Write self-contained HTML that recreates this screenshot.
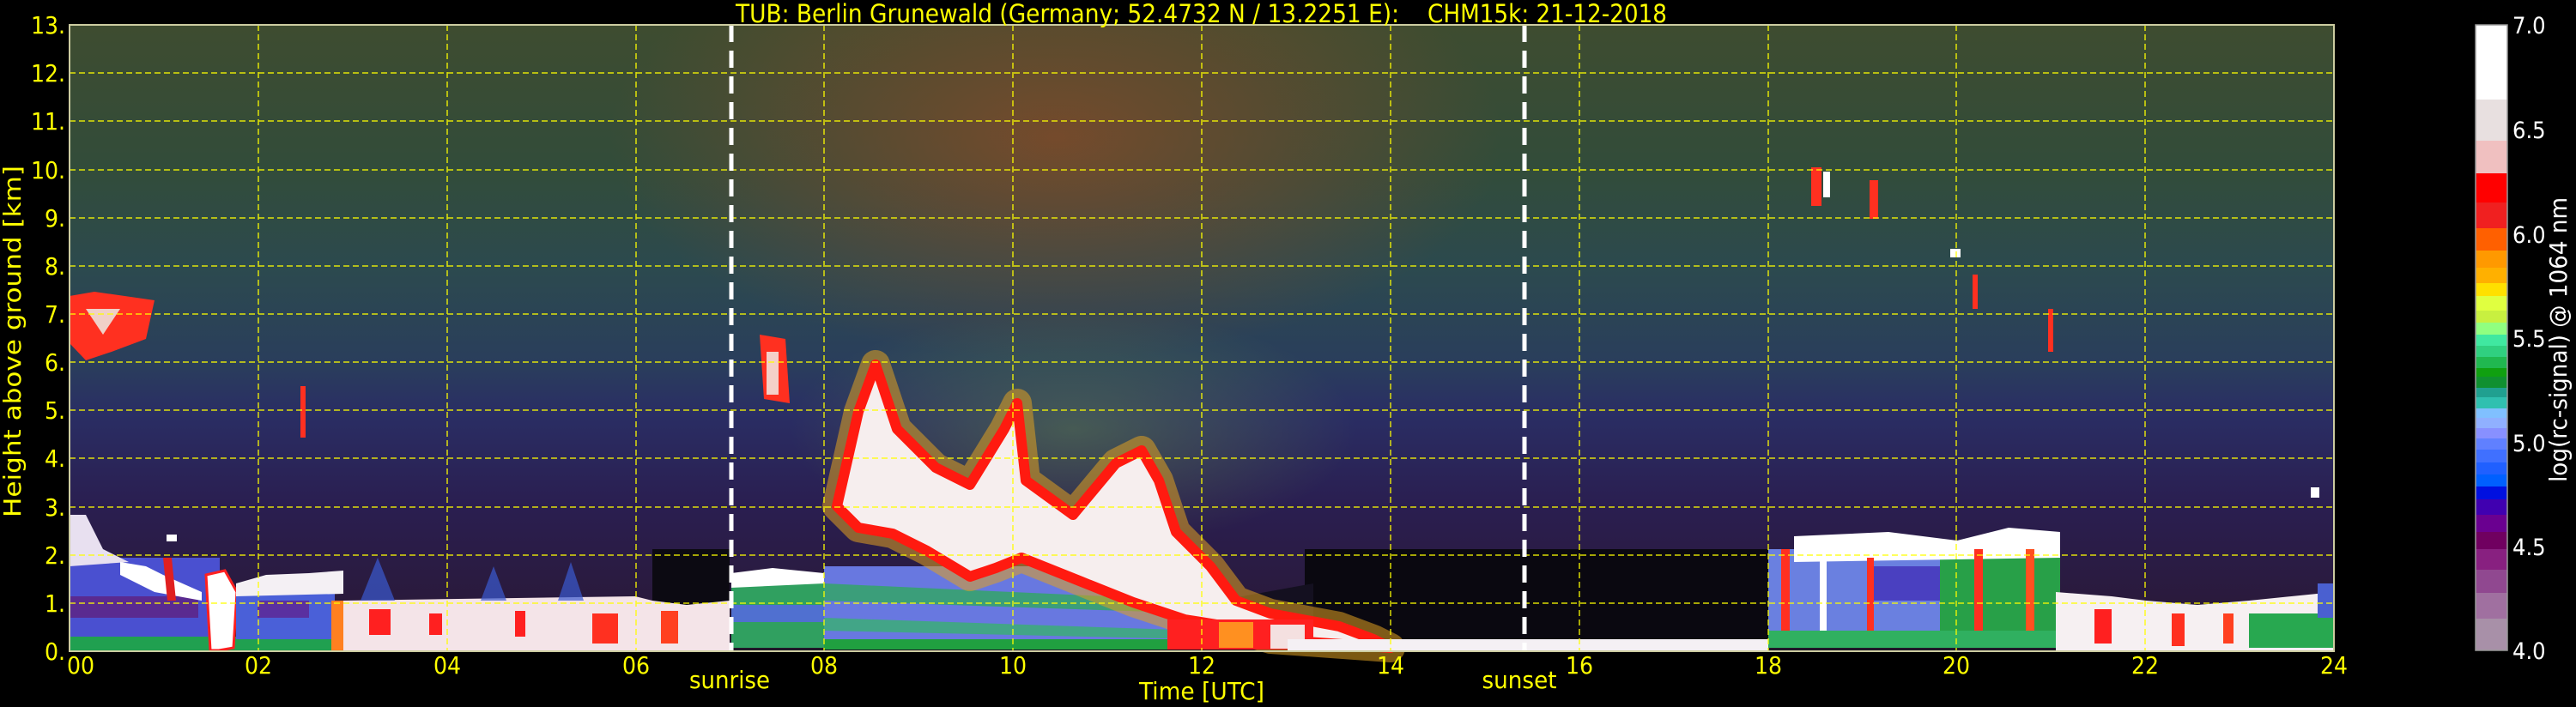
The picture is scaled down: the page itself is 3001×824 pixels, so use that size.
<!DOCTYPE html>
<html><head><meta charset="utf-8"><style>
html,body{margin:0;padding:0;background:#000;width:3001px;height:824px;overflow:hidden}
svg{display:block}
text{font-family:"DejaVu Sans Condensed","Liberation Sans Narrow","Liberation Sans",sans-serif}
</style></head><body>
<svg width="3001" height="824" viewBox="0 0 3001 824" xmlns="http://www.w3.org/2000/svg">
<defs>
<linearGradient id="bg" x1="0" y1="29" x2="0" y2="759" gradientUnits="userSpaceOnUse">
<stop offset="0" stop-color="#3e4c30"/>
<stop offset="0.23" stop-color="#324c3a"/>
<stop offset="0.385" stop-color="#2c4a4e"/>
<stop offset="0.54" stop-color="#2a3e5c"/>
<stop offset="0.62" stop-color="#2a2e64"/>
<stop offset="0.77" stop-color="#2a1e50"/>
<stop offset="0.92" stop-color="#2a1a3c"/>
<stop offset="1" stop-color="#201828"/>
</linearGradient>
<radialGradient id="red" cx="1230" cy="160" r="520" gradientUnits="userSpaceOnUse" gradientTransform="translate(1230 160) scale(1 0.5) translate(-1230 -160)">
<stop offset="0" stop-color="#8a4a28" stop-opacity="0.75"/>
<stop offset="1" stop-color="#8a4a28" stop-opacity="0"/>
</radialGradient>
<radialGradient id="halo" cx="0.5" cy="0.5" r="0.5">
<stop offset="0" stop-color="#70a040" stop-opacity="0.4"/>
<stop offset="1" stop-color="#70a040" stop-opacity="0"/>
</radialGradient>
</defs>
<rect width="3001" height="824" fill="#000"/>
<rect x="81" y="29" width="2638" height="730" fill="url(#bg)"/>
<rect x="81" y="29" width="2638" height="730" fill="url(#red)"/>
<ellipse cx="1250" cy="500" rx="330" ry="140" fill="url(#halo)"/>

<path d="M1520,640 L2060,640 L2060,745 L1520,745 Z" fill="#0a0810"/>
<path d="M1420,700 L1530,680 L1530,745 L1420,745 Z" fill="#141020"/>
<path d="M760,640 L850,640 L850,705 L760,720 Z" fill="#0c0a12"/>

<rect x="81" y="650" width="175" height="95" fill="#4a50d0"/>
<rect x="81" y="695" width="150" height="25" fill="#5a2a90"/>
<path d="M81,600 L100,600 L120,640 L150,655 L81,660 Z" fill="#e8e0f0"/>
<path d="M140,655 L170,660 L190,670 L235,690 L235,700 L180,690 L140,670 Z" fill="#fff"/>
<path d="M190,650 L200,650 L205,700 L195,700 Z" fill="#e02020"/>
<rect x="81" y="742" width="320" height="16" fill="#20a050"/>
<path d="M240,670 L262,665 L276,690 L272,755 L255,758 L245,758 Z" fill="#fff" stroke="#ff2020" stroke-width="3"/>
<rect x="275" y="690" width="115" height="55" fill="#4a60d8"/>
<rect x="300" y="700" width="60" height="20" fill="#5a30a0"/>
<path d="M275,680 L310,670 L360,668 L400,665 L400,692 L275,695 Z" fill="#f4f0f4"/>
<rect x="386" y="700" width="16" height="58" fill="#ff8020"/>
<path d="M400,700 L740,695 L760,700 L800,705 L850,700 L850,759 L400,759 Z" fill="#f4e4e8"/>
<rect x="430" y="710" width="25" height="30" fill="#ff2020"/>
<rect x="500" y="715" width="15" height="25" fill="#ff2020"/>
<rect x="600" y="712" width="12" height="30" fill="#ff2020"/>
<rect x="690" y="715" width="30" height="35" fill="#ff3020"/>
<rect x="770" y="712" width="20" height="38" fill="#ff4020"/>
<path d="M420,700 L440,650 L460,700 Z M560,700 L575,660 L590,700 Z M650,700 L665,655 L680,700 Z" fill="#3a5ad0" opacity="0.7"/>
<rect x="852" y="680" width="110" height="75" fill="#30a060"/>
<rect x="852" y="705" width="110" height="20" fill="#5070d0"/>
<path d="M852,668 L900,662 L960,668 L960,680 L852,685 Z" fill="#fff"/>
<rect x="960" y="660" width="440" height="95" fill="#6878e0"/>
<path d="M960,680 L1400,700 L1400,715 L960,700 Z" fill="#30a860" opacity="0.8"/>
<path d="M960,720 L1400,735 L1400,745 L960,735 Z" fill="#38b070" opacity="0.8"/>
<rect x="960" y="745" width="440" height="12" fill="#20a040"/>
<path d="M975,590 L1000,480 L1020,425 L1045,500 L1090,545 L1130,565 L1170,500 L1185,470 L1195,560 L1250,600 L1300,540 L1330,525 L1350,560 L1370,620 L1410,660 L1440,700 L1480,715 L1560,730 L1600,745 L1620,755 L1480,745 L1430,730 L1380,722 L1320,702 L1260,678 L1190,650 L1160,662 L1130,672 L1080,642 L1040,622 L1000,615 Z" fill="none" stroke="#e0a020" stroke-width="34" stroke-linejoin="round" opacity="0.55"/>
<path d="M975,590 L1000,480 L1020,425 L1045,500 L1090,545 L1130,565 L1170,500 L1185,470 L1195,560 L1250,600 L1300,540 L1330,525 L1350,560 L1370,620 L1410,660 L1440,700 L1480,715 L1560,730 L1600,745 L1620,755 L1480,745 L1430,730 L1380,722 L1320,702 L1260,678 L1190,650 L1160,662 L1130,672 L1080,642 L1040,622 L1000,615 Z" fill="#f6eeee" stroke="#ff1a10" stroke-width="12" stroke-linejoin="round"/>
<rect x="1360" y="722" width="170" height="35" fill="#ff2020"/>
<rect x="1420" y="725" width="40" height="30" fill="#ff9020"/>
<rect x="1480" y="728" width="40" height="28" fill="#f4e0e0"/>
<rect x="1500" y="745" width="560" height="14" fill="#f4f0f4"/>
<rect x="2060" y="640" width="200" height="115" fill="#6a80e0"/>
<rect x="2180" y="660" width="120" height="40" fill="#4a40c0"/>
<rect x="2260" y="650" width="140" height="105" fill="#28a048"/>
<path d="M2090,625 L2200,620 L2280,630 L2340,615 L2400,620 L2400,650 L2090,655 Z" fill="#fff"/>
<rect x="2075" y="640" width="10" height="115" fill="#ff3020"/>
<rect x="2175" y="650" width="8" height="105" fill="#ff3020"/>
<rect x="2300" y="640" width="10" height="115" fill="#ff3020"/>
<rect x="2360" y="640" width="10" height="115" fill="#ff5020"/>
<rect x="2120" y="640" width="8" height="100" fill="#fff"/>
<rect x="2060" y="735" width="340" height="20" fill="#30b060"/>
<path d="M2395,690 L2460,695 L2500,700 L2560,705 L2620,700 L2719,690 L2719,759 L2395,759 Z" fill="#f6f0f2"/>
<rect x="2620" y="715" width="99" height="40" fill="#28a850"/>
<rect x="2440" y="710" width="20" height="40" fill="#ff2020"/>
<rect x="2530" y="715" width="15" height="38" fill="#ff3020"/>
<rect x="2590" y="715" width="12" height="35" fill="#ff4020"/>
<rect x="2700" y="680" width="19" height="40" fill="#4a60d0"/>
<path d="M81,345 L110,340 L180,350 L170,395 L130,410 L100,420 L81,400 Z" fill="#ff3020"/>
<path d="M100,360 L140,360 L120,390 Z" fill="#f0d0c8"/>
<rect x="350" y="450" width="6" height="60" fill="#ff3020"/>
<path d="M885,390 L915,395 L920,470 L890,465 Z" fill="#ff3020"/>
<rect x="893" y="410" width="14" height="50" fill="#f4d0c8"/>
<rect x="2110" y="195" width="12" height="45" fill="#ff3020"/>
<rect x="2124" y="200" width="8" height="30" fill="#fff"/>
<rect x="2178" y="210" width="10" height="45" fill="#ff3020"/>
<rect x="2272" y="290" width="12" height="10" fill="#fff"/>
<rect x="2298" y="320" width="6" height="40" fill="#ff3020"/>
<rect x="2386" y="360" width="6" height="50" fill="#ff3020"/>
<rect x="2692" y="568" width="10" height="12" fill="#fff"/>
<rect x="194" y="623" width="12" height="8" fill="#fff"/>

<g stroke="#ffff00" stroke-width="1.5" stroke-dasharray="7,4" opacity="0.85">
<line x1="81" y1="703" x2="2719" y2="703"/><line x1="81" y1="647" x2="2719" y2="647"/>
<line x1="81" y1="591" x2="2719" y2="591"/><line x1="81" y1="534" x2="2719" y2="534"/>
<line x1="81" y1="478" x2="2719" y2="478"/><line x1="81" y1="422" x2="2719" y2="422"/>
<line x1="81" y1="366" x2="2719" y2="366"/><line x1="81" y1="310" x2="2719" y2="310"/>
<line x1="81" y1="254" x2="2719" y2="254"/><line x1="81" y1="198" x2="2719" y2="198"/>
<line x1="81" y1="141" x2="2719" y2="141"/><line x1="81" y1="85" x2="2719" y2="85"/>
<line x1="301" y1="29" x2="301" y2="759"/><line x1="521" y1="29" x2="521" y2="759"/>
<line x1="741" y1="29" x2="741" y2="759"/><line x1="960" y1="29" x2="960" y2="759"/>
<line x1="1180" y1="29" x2="1180" y2="759"/><line x1="1400" y1="29" x2="1400" y2="759"/>
<line x1="1620" y1="29" x2="1620" y2="759"/><line x1="1840" y1="29" x2="1840" y2="759"/>
<line x1="2060" y1="29" x2="2060" y2="759"/><line x1="2279" y1="29" x2="2279" y2="759"/>
<line x1="2499" y1="29" x2="2499" y2="759"/>
</g>
<g stroke="#fff" stroke-width="5" stroke-dasharray="20,10">
<line x1="852" y1="29" x2="852" y2="759"/>
<line x1="1776" y1="29" x2="1776" y2="759"/>
</g>
<rect x="81" y="29" width="2638" height="730" fill="none" stroke="#cccca0" stroke-width="2"/>

<g fill="#ffff00" font-size="28" text-anchor="end">
<text x="76" y="39">13.</text><text x="76" y="95">12.</text><text x="76" y="151">11.</text>
<text x="76" y="208">10.</text><text x="76" y="264">9.</text><text x="76" y="320">8.</text>
<text x="76" y="376">7.</text><text x="76" y="432">6.</text><text x="76" y="488">5.</text>
<text x="76" y="544">4.</text><text x="76" y="601">3.</text><text x="76" y="657">2.</text>
<text x="76" y="713">1.</text><text x="76" y="769">0.</text>
</g>
<g fill="#ffff00" font-size="28" text-anchor="middle">
<text x="94" y="785">00</text><text x="301" y="785">02</text><text x="521" y="785">04</text>
<text x="741" y="785">06</text><text x="960" y="785">08</text><text x="1180" y="785">10</text>
<text x="1400" y="785">12</text><text x="1620" y="785">14</text><text x="1840" y="785">16</text>
<text x="2060" y="785">18</text><text x="2279" y="785">20</text><text x="2499" y="785">22</text>
<text x="2719" y="785">24</text>
<text x="850" y="802" textLength="94" lengthAdjust="spacingAndGlyphs">sunrise</text>
<text x="1770" y="802" textLength="87" lengthAdjust="spacingAndGlyphs">sunset</text>
<text x="1400" y="815" textLength="146" lengthAdjust="spacingAndGlyphs">Time [UTC]</text>
</g>
<text x="857" y="26" fill="#ffff00" font-size="29" textLength="773" lengthAdjust="spacingAndGlyphs">TUB: Berlin Grunewald (Germany; 52.4732 N / 13.2251 E):</text>
<text x="1663" y="26" fill="#ffff00" font-size="29" textLength="279" lengthAdjust="spacingAndGlyphs">CHM15k: 21-12-2018</text>
<text transform="translate(24,398) rotate(-90)" fill="#ffff00" font-size="28" text-anchor="middle" textLength="410" lengthAdjust="spacingAndGlyphs">Height above ground [km]</text>

<g>
<rect x="2884" y="29" width="37" height="87" fill="#ffffff"/>
<rect x="2884" y="116" width="37" height="48" fill="#e8e0e0"/>
<rect x="2884" y="164" width="37" height="38" fill="#f0c0c0"/>
<rect x="2884" y="202" width="37" height="34" fill="#ff0000"/>
<rect x="2884" y="236" width="37" height="30" fill="#f02020"/>
<rect x="2884" y="266" width="37" height="26" fill="#ff6000"/>
<rect x="2884" y="292" width="37" height="20" fill="#ff9900"/>
<rect x="2884" y="312" width="37" height="18" fill="#ffb000"/>
<rect x="2884" y="330" width="37" height="15" fill="#ffe000"/>
<rect x="2884" y="345" width="37" height="17" fill="#e0ff40"/>
<rect x="2884" y="362" width="37" height="14" fill="#c8f040"/>
<rect x="2884" y="376" width="37" height="14" fill="#90ff80"/>
<rect x="2884" y="390" width="37" height="13" fill="#40e8a0"/>
<rect x="2884" y="403" width="37" height="13" fill="#30d080"/>
<rect x="2884" y="416" width="37" height="13" fill="#20b850"/>
<rect x="2884" y="429" width="37" height="10" fill="#10a010"/>
<rect x="2884" y="439" width="37" height="13" fill="#109030"/>
<rect x="2884" y="452" width="37" height="11" fill="#20a090"/>
<rect x="2884" y="463" width="37" height="13" fill="#30c0b0"/>
<rect x="2884" y="476" width="37" height="11" fill="#80c0ff"/>
<rect x="2884" y="487" width="37" height="12" fill="#90b0ff"/>
<rect x="2884" y="499" width="37" height="12" fill="#8890ff"/>
<rect x="2884" y="511" width="37" height="13" fill="#6080ff"/>
<rect x="2884" y="524" width="37" height="15" fill="#4070ff"/>
<rect x="2884" y="539" width="37" height="14" fill="#2060ff"/>
<rect x="2884" y="553" width="37" height="14" fill="#0060ff"/>
<rect x="2884" y="567" width="37" height="15" fill="#0010e0"/>
<rect x="2884" y="582" width="37" height="18" fill="#4000b0"/>
<rect x="2884" y="600" width="37" height="20" fill="#6a0090"/>
<rect x="2884" y="620" width="37" height="20" fill="#700060"/>
<rect x="2884" y="640" width="37" height="24" fill="#882080"/>
<rect x="2884" y="664" width="37" height="27" fill="#904890"/>
<rect x="2884" y="691" width="37" height="30" fill="#a070a0"/>
<rect x="2884" y="721" width="37" height="37" fill="#a890a8"/>
<rect x="2884" y="29" width="37" height="729" fill="none" stroke="#999" stroke-width="1.5"/>
</g>
<g fill="#fff" font-size="27">
<text x="2927" y="39">7.0</text><text x="2927" y="161">6.5</text><text x="2927" y="283">6.0</text>
<text x="2927" y="404">5.5</text><text x="2927" y="526">5.0</text><text x="2927" y="647">4.5</text>
<text x="2927" y="768">4.0</text>
</g>
<text transform="translate(2990,396) rotate(-90)" fill="#fff" font-size="28" text-anchor="middle" textLength="332" lengthAdjust="spacingAndGlyphs">log(rc-signal) @ 1064 nm</text>
</svg>
</body></html>
